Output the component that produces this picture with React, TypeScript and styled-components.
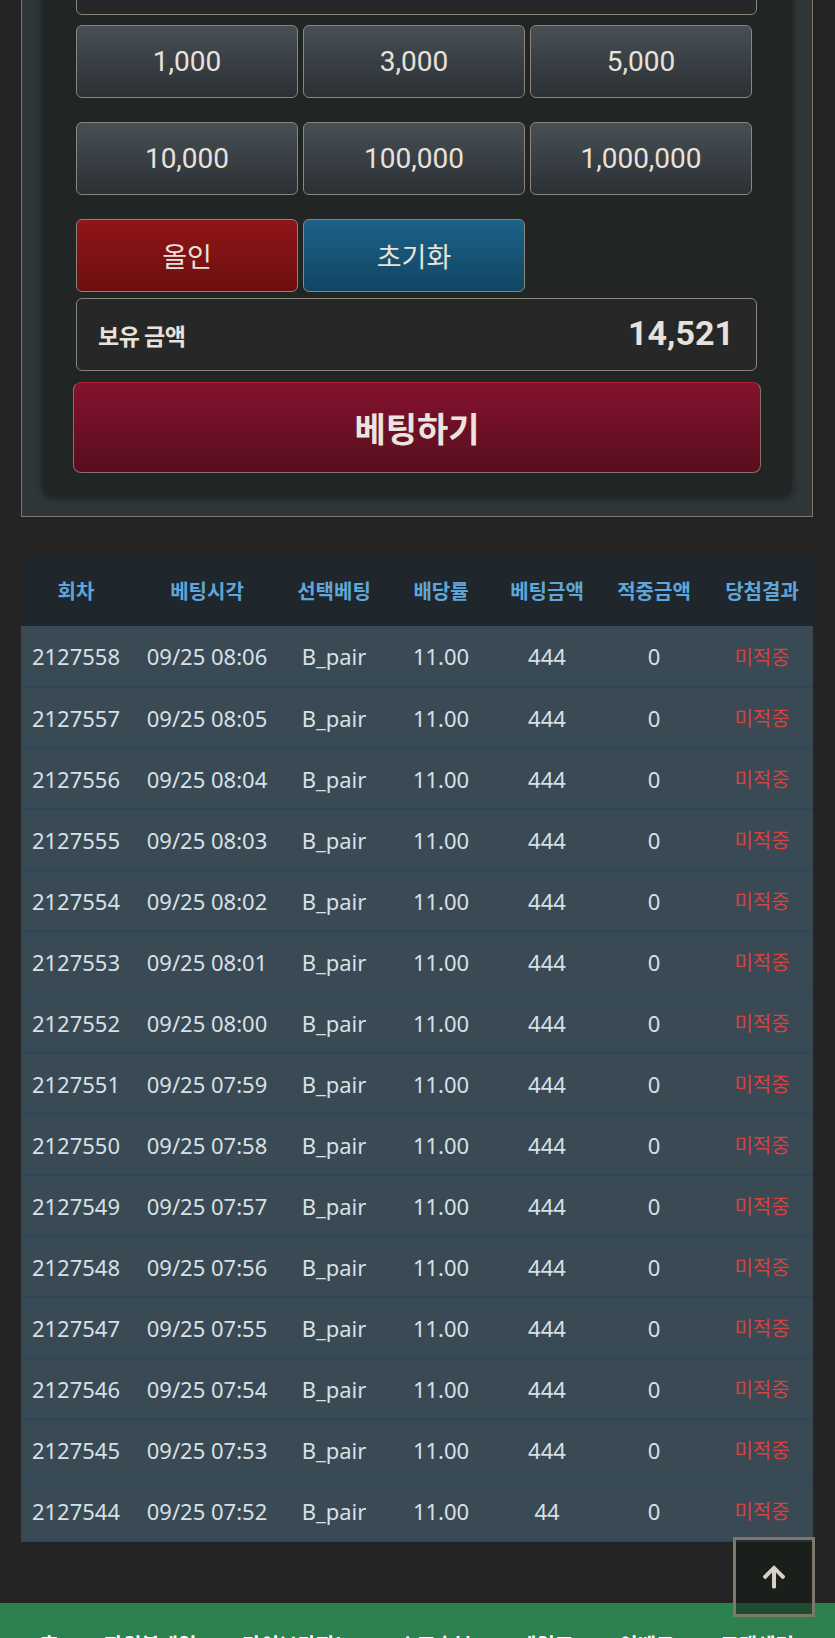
import React from 'react'
import styled, { createGlobalStyle } from 'styled-components'
import { FaArrowUp } from 'react-icons/fa'

const GlobalStyle = createGlobalStyle`
  html, body {
    margin: 0;
    padding: 0;
    background: #232423;
  }
  body {
    font-family: 'Noto Sans', 'Noto Sans CJK KR', sans-serif;
    color: #e8e2da;
  }
  * {
    box-sizing: border-box;
  }
`

const Page = styled.div`
  margin-top: -80px;
  padding: 0 22px 0 21px;
`

const Frame = styled.section`
  border: 1px solid #7d776c;
  background: #2f3739;
  padding: 21px 20px 22px 21px;
`

const Panel = styled.div`
  background: #212524;
  border-radius: 8px;
  box-shadow: 0 4px 8px rgba(0, 0, 0, 0.45);
  padding: 16px 35px 21px 33px;
  display: flex;
  flex-direction: column;
`

const AmountInput = styled.div`
  height: 57px;
  border: 1px solid #8c857a;
  border-radius: 6px;
  background: #262828;
`

const ButtonGrid = styled.div<{ $mt: number }>`
  display: grid;
  grid-template-columns: repeat(3, 222px);
  column-gap: 5px;
  margin-top: ${({ $mt }) => $mt}px;
`

const variants = {
  dark: 'linear-gradient(to bottom, #474f55, #2b3034)',
  red: 'linear-gradient(to bottom, #901519, #6d0f0f)',
  blue: 'linear-gradient(to bottom, #1c6288, #114563)',
}

const ChipButton = styled.button<{ $variant: keyof typeof variants }>`
  height: 73px;
  border: 1px solid #8c857a;
  border-radius: 6px;
  background: ${({ $variant }) => variants[$variant]};
  color: #e8e2da;
  font-family: Roboto, 'Noto Sans CJK KR', sans-serif;
  font-size: ${({ $variant }) => ($variant === 'dark' ? 28 : 27)}px;
  padding: 0;
  cursor: pointer;
`

const Balance = styled.div`
  margin-top: 6px;
  height: 73px;
  border: 1px solid #8c857a;
  border-radius: 6px;
  background: #262828;
  display: flex;
  align-items: center;
  justify-content: space-between;
  padding: 0 22px 4px 21px;
`

const BalanceLabel = styled.span`
  font-family: 'Noto Sans CJK KR', sans-serif;
  font-weight: 700;
  font-size: 23px;
  letter-spacing: -0.5px;
  margin-top: 4px;
`

const BalanceValue = styled.span`
  font-family: Roboto, sans-serif;
  font-weight: 700;
  font-size: 34px;
`

const BetButton = styled.button`
  margin: 11px -4px 0 -3px;
  height: 91px;
  border: 1px solid #8c6f6a;
  border-top-color: #b5212f;
  border-radius: 8px;
  background: linear-gradient(to bottom, #84122d, #580e1e);
  color: #ece4de;
  font-family: 'Noto Sans CJK KR', sans-serif;
  font-weight: 700;
  font-size: 34px;
  cursor: pointer;
`

const Table = styled.table`
  margin-top: 38px;
  width: 792px;
  border-collapse: collapse;
  table-layout: fixed;
`

const HeadCell = styled.th`
  height: 71px;
  background: #1f262c;
  color: #5fa6d9;
  font-family: 'Noto Sans CJK KR', sans-serif;
  font-weight: 700;
  font-size: 20px;
  padding: 0;
`

const Row = styled.tr`
  background: #394a55;
  border-bottom: 2px solid #2e4858;
`

const Cell = styled.td<{ $miss?: boolean }>`
  height: 61px;
  padding: 0;
  text-align: center;
  color: ${({ $miss }) => ($miss ? '#d9413f' : '#d8e0e6')};
  font-size: ${({ $miss }) => ($miss ? 20 : 22)}px;
  white-space: nowrap;
`

const Footer = styled.footer`
  margin-top: 61px;
  height: 36px;
  overflow: hidden;
  background: #2d804f;
  padding: 27px 41px 0 40px;
  display: flex;
  align-items: flex-start;
  justify-content: space-between;
`

const FooterLink = styled.a`
  color: #ffffff;
  font-family: 'Noto Sans CJK KR', sans-serif;
  font-weight: 700;
  font-size: 20px;
  line-height: 30px;
  text-decoration: none;
`

const TopButton = styled.button`
  position: fixed;
  right: 20px;
  bottom: 21px;
  width: 82px;
  height: 80px;
  border: 3px solid #7e776b;
  background: rgba(20, 25, 22, 0.5);
  color: #d6d0c6;
  display: flex;
  align-items: center;
  justify-content: center;
  padding: 0;
`

const amounts = ['1,000', '3,000', '5,000', '10,000', '100,000', '1,000,000']
const colWidths = [110, 152, 102, 112, 100, 114, 102]
const headers = ['회차', '베팅시각', '선택베팅', '배당률', '베팅금액', '적중금액', '당첨결과']
const times = ['08:06', '08:05', '08:04', '08:03', '08:02', '08:01', '08:00', '07:59', '07:58', '07:57', '07:56', '07:55', '07:54', '07:53', '07:52']
const rows = times.map((t, i) => ({
  round: 2127558 - i,
  time: `09/25 ${t}`,
  pick: 'B_pair',
  odds: '11.00',
  bet: i === times.length - 1 ? '44' : '444',
  win: '0',
}))
const menu = ['홈', '파워볼게임', '라이브카지노', '스포츠북', '게임즈', '이벤트', '고객센터']

export default function App() {
  return (
    <>
      <GlobalStyle />
      <Page>
        <Frame>
          <Panel>
            <AmountInput />
            <ButtonGrid $mt={10}>
              {amounts.slice(0, 3).map((a) => (
                <ChipButton key={a} $variant="dark">{a}</ChipButton>
              ))}
            </ButtonGrid>
            <ButtonGrid $mt={24}>
              {amounts.slice(3).map((a) => (
                <ChipButton key={a} $variant="dark">{a}</ChipButton>
              ))}
            </ButtonGrid>
            <ButtonGrid $mt={24}>
              <ChipButton $variant="red">올인</ChipButton>
              <ChipButton $variant="blue">초기화</ChipButton>
            </ButtonGrid>
            <Balance>
              <BalanceLabel>보유 금액</BalanceLabel>
              <BalanceValue>14,521</BalanceValue>
            </Balance>
            <BetButton>베팅하기</BetButton>
          </Panel>
        </Frame>

        <Table>
          <colgroup>
            {colWidths.map((w, i) => (
              <col key={i} style={{ width: w }} />
            ))}
          </colgroup>
          <thead>
            <tr>
              {headers.map((h) => (
                <HeadCell key={h}>{h}</HeadCell>
              ))}
            </tr>
          </thead>
          <tbody>
            {rows.map((r) => (
              <Row key={r.round}>
                <Cell>{r.round}</Cell>
                <Cell>{r.time}</Cell>
                <Cell>{r.pick}</Cell>
                <Cell>{r.odds}</Cell>
                <Cell>{r.bet}</Cell>
                <Cell>{r.win}</Cell>
                <Cell $miss>미적중</Cell>
              </Row>
            ))}
          </tbody>
        </Table>
      </Page>

      <Footer>
        {menu.map((m) => (
          <FooterLink key={m} href="#">{m}</FooterLink>
        ))}
      </Footer>

      <TopButton aria-label="맨 위로">
        <FaArrowUp size={26} />
      </TopButton>
    </>
  )
}
